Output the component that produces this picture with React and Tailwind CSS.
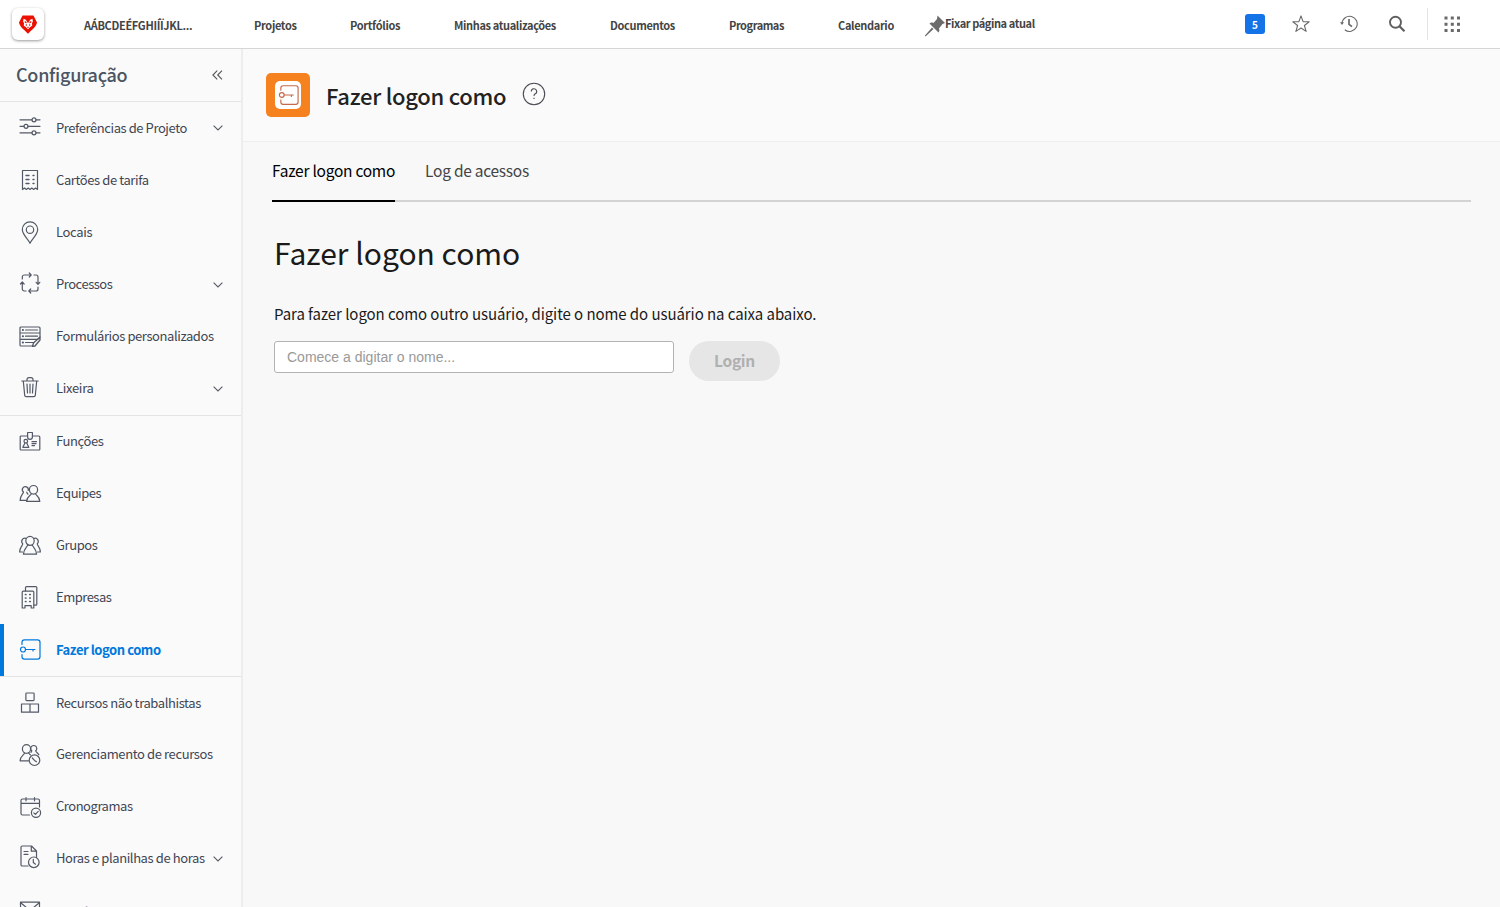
import React from "react";

const FONT = "font-['Noto_Sans_CJK_SC','Open_Sans',sans-serif]";

const Icon = ({ children, className = "" }) => (
  <svg viewBox="0 0 24 28" width="24" height="28" fill="none" stroke="currentColor" strokeWidth="1.2" strokeLinejoin="round" strokeLinecap="round" className={`shrink-0 ${className}`}>
    {children}
  </svg>
);

const Key = () => (
  <>
    <path d="M4 8.5V6.2a2.4 2.4 0 0 1 2.4-2.4h13.2A2.4 2.4 0 0 1 22 6.2v14.6a2.4 2.4 0 0 1-2.4 2.4H6.4A2.4 2.4 0 0 1 4 20.800v-2.300" />
    <circle cx="5" cy="13.500" r="2.500" />
    <path d="M7.500 13.500H17M15 13.500v1.500" />
  </>
);

const icons = {
  prefs: (
    <>
      <path d="M2 5.800h12M18 5.800h4M2 12.300h4M10 12.300h12M2 18.800h12M18 18.800h4" />
      <circle cx="16" cy="5.800" r="2" /><circle cx="8" cy="12.300" r="2" /><circle cx="16" cy="18.800" r="2" />
    </>
  ),
  rates: (
    <>
      <path d="M4.500 23.500V4.500h15v19l-2-1.500-1.800 1.500-1.900-1.500-1.800 1.500-1.800-1.500-1.900 1.500-1.800-1.500z" />
      <path d="M8 9.500h3M15 9.500h1M8 13.500h3M15 13.500h1M8 17.500h3M15 17.500h1" strokeWidth="1.400" />
    </>
  ),
  pin: (
    <>
      <path d="M12 25.300C10 21 4.300 16.500 4.300 11.500a7.700 7.700 0 0 1 15.400 0C19.700 16.500 14 21 12 25.300z" />
      <circle cx="12" cy="11.700" r="3.700" />
    </>
  ),
  process: (
    <path d="M4.300 8V6a2 2 0 0 1 2-2H13M11.300 2l1.900 2-1.900 2M16 4h2a2 2 0 0 1 2 2v7M18.200 11.300l1.800 2 1.800-2M20 16v2a2 2 0 0 1-2 2h-7M12.700 18l-1.900 2 1.900 2M8 20H6.300a2 2 0 0 1-2-2v-6.500M2.500 13l1.800-2 1.800 2" />
  ),
  forms: (
    <>
      <path d="M22 14V5a1 1 0 0 0-1-1H3a1 1 0 0 0-1 1v17a1 1 0 0 0 1 1h11.500" />
      <path d="M2.500 10h19M2.500 16.300h17.500M7.500 7h12M7.500 13.200h12M7.500 19.500h8" />
      <path d="M4.800 7h.2M4.800 13.200h.2M4.800 19.500h.2" strokeWidth="2" />
      <path d="M14.500 23.300l1-3.300L22 14v3l-5 6z" strokeWidth="1.300" />
    </>
  ),
  trash: (
    <path d="M3.800 6h16.400M9 6V4.500A1.800 1.800 0 0 1 10.800 2.700h2.400A1.800 1.800 0 0 1 15 4.500V6M5.300 6l1.400 14.300a1.500 1.500 0 0 0 1.500 1.300h7.600a1.500 1.500 0 0 0 1.500-1.300L18.700 6M9 9l.5 9M12 9v9M15 9l-.5 9" />
  ),
  badge: (
    <>
      <path d="M9.500 8H3.200a1 1 0 0 0-1 1v12.200a.8.800 0 0 0 .8.800h18a.8.800 0 0 0 .8-.8V9a1 1 0 0 0-1-1h-6.300" />
      <path d="M9.600 4.500h4.800v4.500a2.400 2.400 0 0 1-4.800 0zM14 13.700h4.500M14 15.700h4M14 17.700h2.500" />
      <circle cx="7.800" cy="13.200" r="1.800" />
      <path d="M7 15l-2.200 4.300h6L8.700 15" />
    </>
  ),
  team: (
    <>
      <ellipse cx="15.500" cy="9.800" rx="4.100" ry="4.300" />
      <path d="M13.400 13.500c-.2 2.200-4.400 2.300-4.900 7.900h13.300c-.3-5.600-4.100-5.700-4.400-7.900" />
      <path d="M10.200 10.500A3 3 0 1 0 5.500 12c0 1.700-3.200 3-3.400 8.400h6M8.800 12.200c0 .8.500 1.200 1.200 2" />
    </>
  ),
  group: (
    <>
      <ellipse cx="12" cy="8.800" rx="4.200" ry="4.500" />
      <path d="M9.700 12.700c-.2 2.500-4 3.500-4.300 9.500h13.200c-.3-6-4.100-7-4.300-9.500" />
      <path d="M7.700 6.300a3.200 3.200 0 0 0-3 5.400c0 2.300-2.800 3-3.100 8.300h3M16.300 6.300a3.200 3.200 0 0 1 3 5.400c0 2.300 2.800 3 3.100 8.300h-3" />
    </>
  ),
  building: (
    <>
      <path d="M7.500 7V3.600a1 1 0 0 1 1-1h9.300a1 1 0 0 1 1 1v16.600a1 1 0 0 1-1 1H16" />
      <path d="M4.200 24V8.200a1 1 0 0 1 1-1h9.600a1 1 0 0 1 1 1V24h-2.600v-2.400H7V24z" />
      <path d="M7.500 10.500h.4M11.800 10.500h.4M7.500 14h.4M11.800 14h.4M7.500 17.500h.4M11.800 17.500h.4" strokeWidth="1.700" />
    </>
  ),
  key: <Key />,
  boxes: (
    <path d="M8.700 4h6.600a.8.800 0 0 1 .8.800v6a.8.800 0 0 1-.8.800H8.700a.8.800 0 0 1-.8-.8v-6a.8.800 0 0 1 .8-.8zM3.500 15h17v8.200h-17zM12 15v8" />
  ),
  resource: (
    <>
      <ellipse cx="8.500" cy="8" rx="4.100" ry="4.300" />
      <path d="M6.500 12c-.3 2.300-4 2.500-4.400 7.800h8.400M10.500 11.700c.3 1 1.200 1.500 2 2.200" />
      <path d="M13.800 9.800a3 3 0 1 1 3.900 0c.3 1.700 2.500 2 3.100 3.900M13.800 9.800c-.1.800-.4 1.200-.8 1.600" />
      <circle cx="16.500" cy="19.200" r="5.300" />
      <path d="M14.300 17l2.200 2.400 2 1.300" />
    </>
  ),
  calendar: (
    <>
      <path d="M11.500 22H4.500a1.500 1.500 0 0 1-1.500-1.500V7.500A1.500 1.500 0 0 1 4.500 6h15.500A1.500 1.500 0 0 1 21.500 7.500V14M3 10.300h18.500M8 4.500v3.300M16.500 4.500v3.300" />
      <circle cx="18" cy="19.800" r="4.600" />
      <path d="M15.800 19.800l1.600 1.600 2.800-3" />
    </>
  ),
  hours: (
    <>
      <path d="M10 21H4.300a1.300 1.300 0 0 1-1.300-1.300V2.300A1.300 1.300 0 0 1 4.300 1h9.200l5 5v6.500M13.300 1v5.200h5.200M6 6.500h4M6 9.300h4" />
      <circle cx="15.800" cy="17.300" r="5.300" />
      <path d="M15.300 14.300v3.200l2.200 1.700" />
    </>
  ),
  mail: <path d="M2.500 5.200h19v15h-19zM3 6l9 7.500L21 6" />,
};

const groups = [
  {
    cls: "h-[313px]",
    items: [
      ["prefs", "Preferências de Projeto", true, "tracking-[-0.42px]"],
      ["rates", "Cartões de tarifa", false, "tracking-[-0.4px]"],
      ["pin", "Locais", false, "tracking-[-0.35px]"],
      ["process", "Processos", true, "tracking-[-0.48px] pb-px"],
      ["forms", "Formulários personalizados", false, "tracking-[-0.41px] pb-px"],
      ["trash", "Lixeira", true, "tracking-[-0.3px] pb-px"],
    ],
  },
  {
    cls: "h-[261px] border-t border-[#e4e4e4]",
    items: [
      ["badge", "Funções", false, "tracking-[-0.4px] pb-0.5"],
      ["team", "Equipes", false, "tracking-[-0.47px] pb-0.5"],
      ["group", "Grupos", false, "tracking-[-0.42px] pb-0.5"],
      ["building", "Empresas", false, "tracking-[-0.5px] pb-0.5"],
      ["key", "Fazer logon como", false, "tracking-[-0.45px]"],
    ],
  },
  {
    cls: "h-[261px] border-t border-[#e4e4e4]",
    items: [
      ["boxes", "Recursos não trabalhistas", false, "tracking-[-0.4px]"],
      ["resource", "Gerenciamento de recursos", false, "tracking-[-0.38px] pb-0.5"],
      ["calendar", "Cronogramas", false, "tracking-[-0.47px] pb-0.5"],
      ["hours", "Horas e planilhas de horas", true, "tracking-[-0.4px] pb-0.5"],
      ["mail", "Email", false, "tracking-[-0.45px] pt-0.5"],
    ],
  },
];

const Chevron = () => (
  <svg width="10" height="6" viewBox="0 0 10 6" fill="none" stroke="#555b66" strokeWidth="1.100" className="ml-auto shrink-0">
    <path d="M.6.600L5 5 9.400.600" />
  </svg>
);

function Item({ item: [icon, label, open, track] }) {
  const active = icon === "key";
  return (
    <a className={`flex flex-1 min-h-0 items-center pr-[18px] border-l-4 pl-[14px] ${active ? "border-[#0078dc] text-[#0078dc] font-bold" : "border-transparent text-[#3f4654]"}`}>
      <Icon className={active ? "" : "text-[#535966]"}>{icons[icon]}</Icon>
      <span className={`ml-[14px] text-[13px] leading-5 whitespace-nowrap ${track}`}>{label}</span>
      {open && <Chevron />}
    </a>
  );
}

const nav = [
  ["AÁBCDEÉFGHIÍÏJKL...", "w-[170px]", "tracking-[-0.33px]"],
  ["Projetos", "w-[96px]", "tracking-[-0.33px]"],
  ["Portfólios", "w-[104px]", "tracking-[-0.33px]"],
  ["Minhas atualizações", "w-[156px]", "tracking-[-0.35px]"],
  ["Documentos", "w-[119px]", "tracking-[-0.33px]"],
  ["Programas", "w-[109px]", "tracking-[-0.45px]"],
  ["Calendario", "w-[86px]", "tracking-[-0.33px]"],
];

function Header() {
  return (
    <header className="flex h-[49px] shrink-0 items-center border-b border-[#d6d6d6] bg-white">
      <div className="ml-3 flex h-8 w-8 items-center justify-center rounded-md bg-white shadow-[0_1px_3px_rgba(0,0,0,0.4)]">
        <svg width="18" height="19" viewBox="0 0 18 19">
          <path d="M3.500.500h11L18 7.500c-.8 4.500-5 7-9 11.200C5 14.500.8 12 0 7.500z" fill="#eb1000" />
          <path d="M4.600 3.800l2.200.9L9 8.200l2.200-3.500 2.200-.9.500 2.600-.9 1.600.2 2.700-2 1.300L9 14.200 6.800 12l-2-1.300L5 8l-.9-1.600z" fill="#fff" />
          <path d="M5.800 6.500l1.700 1.700M12.200 6.500l-1.700 1.700M7.300 9.300v1.400M10.700 9.300v1.400M8.200 12.200h1.600" stroke="#eb1000" strokeWidth="1.100" fill="none" />
        </svg>
      </div>
      <nav className="ml-10 flex items-center pt-px text-[11px] leading-4 font-bold text-[#444]">
        {nav.map(([t, w, k]) => (
          <a key={t} className={`${w} ${k} whitespace-nowrap`}><span>{t}</span></a>
        ))}
      </nav>
      <div className="flex items-center text-[11px] leading-4 font-bold text-[#444]">
        <svg width="22" height="22" viewBox="0 0 22 22" fill="#6b6b6b" className="mt-1">
          <path d="M13.500.500L21 8l-2.500 1-3.500 4.500c.7 1.800.3 3-.5 4L5.500 8.500c1-1 2.500-1.200 4-.5L13 4z" />
          <path d="M8 12.500l1.500 1.500L1.500 21.500.800 20.800z" />
        </svg>
        <span className="-ml-px -mt-[3px] tracking-[-0.4px] whitespace-nowrap">Fixar página atual</span>
      </div>
      <div className="ml-auto flex items-center pr-[39px] text-[#6a6a6a]">
        <span className="flex h-5 w-5 items-center justify-center rounded-[3px] bg-[#1473e6] text-[10px] font-bold text-white">5</span>
        <svg width="18" height="18" viewBox="0 0 18 18" className="ml-[27px]" fill="none" stroke="currentColor" strokeWidth="1.100" strokeLinejoin="round">
          <path d="M9 .9l2.100 5.700 6.100.200-4.800 3.700 1.700 5.900L9 13l-5.100 3.400 1.700-5.900L.8 6.800l6.100-.2z" />
        </svg>
        <svg width="18" height="18" viewBox="0 0 18 18" className="ml-[30px]" fill="none" stroke="currentColor" strokeWidth="1.100">
          <path d="M2 8.500A7.600 7.600 0 1 1 4.800 14.800" />
          <path d="M0 7.200h4L2 9.900z" fill="currentColor" stroke="none" />
          <path d="M9 4v5.300l3 2.400" strokeWidth="1.700" />
        </svg>
        <svg width="18" height="18" viewBox="0 0 18 18" className="ml-[30px] text-[#5f5f5f]" fill="none" stroke="currentColor" strokeWidth="1.900">
          <circle cx="7.500" cy="7.200" r="5.500" />
          <path d="M11.500 11.300l5 5" strokeWidth="2.200" />
        </svg>
        <span className="ml-[21px] h-8 w-px bg-[#e4e4e4]" />
        <svg width="17" height="17" viewBox="0 0 17 17" className="ml-4" fill="currentColor">
          <path d="M.5.500h3v3h-3zM6.800.500h3v3h-3zM13 .5h3v3h-3zM.5 6.800h3v3h-3zM6.800 6.800h3v3h-3zM13 6.800h3v3h-3zM.5 13h3v3h-3zM6.800 13h3v3h-3zM13 13h3v3h-3z" />
        </svg>
      </div>
    </header>
  );
}

export default function App() {
  return (
    <div className={`flex h-[907px] w-[1500px] flex-col overflow-hidden bg-[#f8f8f8] ${FONT}`}>
      <Header />
      <div className="flex min-h-0 flex-1">
        <aside className="w-[243px] shrink-0 overflow-hidden border-r-2 border-[#ededed] bg-[#fafafa]">
          <div className="flex h-[53px] items-center justify-between border-b border-[#e4e4e4] pr-[18px] pl-4 text-[#4b5563]">
            <h2 className="pb-0.5 text-[18px] leading-6 font-medium tracking-[-0.27px]">Configuração</h2>
            <svg width="11" height="10" viewBox="0 0 11 10" fill="none" stroke="#555" strokeWidth="1.100">
              <path d="M5.200.600L.900 5l4.300 4.400M10 .6L5.700 5 10 9.400" />
            </svg>
          </div>
          {groups.map((g, i) => (
            <div key={i} className={`flex flex-col ${g.cls}`}>
              {g.items.map((it) => <Item key={it[0]} item={it} />)}
            </div>
          ))}
        </aside>
        <main className="flex-1">
          <div className="flex h-[93px] items-center border-b border-[#eeeeee] bg-[#fafafa] pl-[23px]">
            <div className="flex h-11 w-11 items-center justify-center rounded-[5px] bg-[#f5821f]">
              <div className="flex h-7 w-[26px] items-center justify-center rounded-[5px] bg-white text-[#c4694a]">
                <Icon className="h-[27px] w-[23px]"><Key /></Icon>
              </div>
            </div>
            <h1 className="ml-4 pb-px text-[22px] leading-8 font-medium tracking-[-0.26px] text-[#222]">Fazer logon como</h1>
            <svg width="24" height="24" viewBox="0 0 24 24" fill="none" stroke="#4b4b55" strokeWidth="1.100" className="mb-0.5 ml-4">
              <circle cx="12" cy="12" r="10.700" />
              <path d="M9.300 9.500A2.700 2.700 0 1 1 12.900 12c-.7.400-.9.800-.9 2M12 15.700v1.400" />
            </svg>
          </div>
          <div className="ml-[29px] mr-[29px] flex h-[60px] gap-[30px] border-b-2 border-[#d3d3d3] text-[15.5px] leading-6 tracking-[-0.26px]">
            <a className="-mb-0.5 h-[60px] border-b-2 border-black pt-4 text-black">Fazer logon como</a>
            <a className="pt-4 text-[#444]">Log de acessos</a>
          </div>
          <div className="pl-[31px]">
            <h2 className="mt-[26px] text-[30px] leading-[48px] text-[#1a1a1a]">Fazer logon como</h2>
            <p className="mt-[26px] text-[15px] leading-6 tracking-[-0.065px] text-[#1a1a1a]">Para fazer logon como outro usuário, digite o nome do usuário na caixa abaixo.</p>
            <div className="mt-[15px] flex items-start">
              <div className="flex h-8 w-[400px] items-center rounded-[3px] border border-[#b3b3b3] bg-white pl-3 font-['Liberation_Sans',sans-serif] text-[14px] text-[#999]">Comece a digitar o nome...</div>
              <button className="ml-[15px] h-10 w-[91px] rounded-full bg-[#e6e6e6] pb-px text-[15.5px] font-bold tracking-[-0.3px] text-[#b0b0b0]">Login</button>
            </div>
          </div>
        </main>
      </div>
    </div>
  );
}
